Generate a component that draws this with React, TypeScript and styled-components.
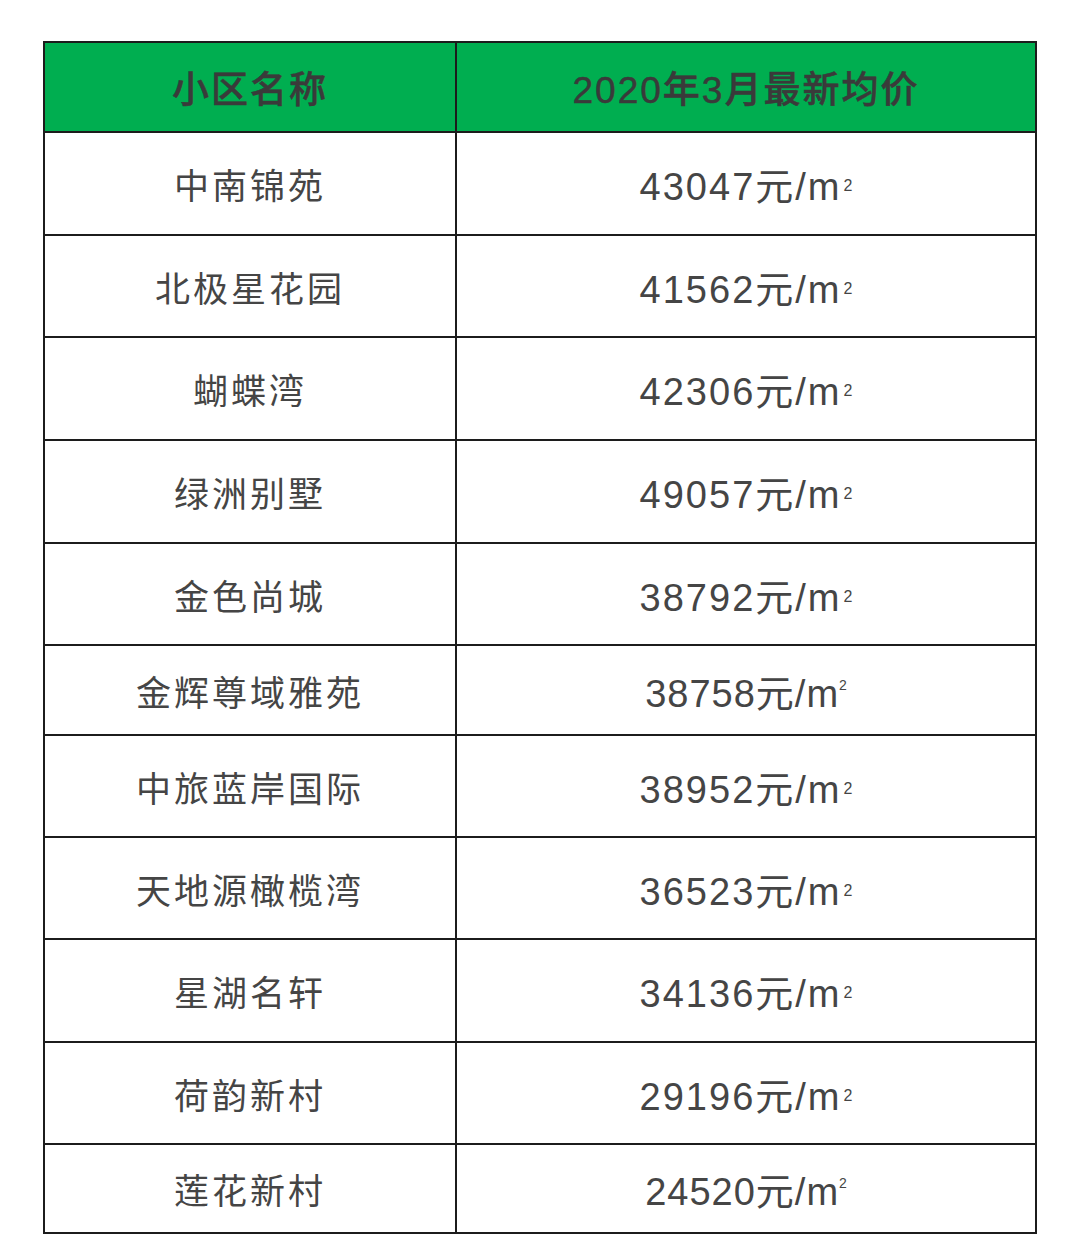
import styled, { createGlobalStyle } from "styled-components"

const GlobalStyle = createGlobalStyle`
    body {
        margin: 0;
        background: #ffffff;
        font-family: "Noto Sans CJK SC", "Noto Sans", sans-serif;
    }
`

const rows = [
    { name: '中南锦苑', price: '43047', h: 103 },
    { name: '北极星花园', price: '41562', h: 102 },
    { name: '蝴蝶湾', price: '42306', h: 103 },
    { name: '绿洲别墅', price: '49057', h: 103 },
    { name: '金色尚城', price: '38792', h: 102 },
    { name: '金辉尊域雅苑', price: '38758', h: 90, tight: true },
    { name: '中旅蓝岸国际', price: '38952', h: 102 },
    { name: '天地源橄榄湾', price: '36523', h: 102 },
    { name: '星湖名轩', price: '34136', h: 103 },
    { name: '荷韵新村', price: '29196', h: 102 },
    { name: '莲花新村', price: '24520', h: 89, tight: true },
]

export default function App() {
    return (
        <Page>
            <GlobalStyle />
            <PriceTable>
                <thead>
                    <tr>
                        <HeadCell>小区名称</HeadCell>
                        <HeadCell>2020年3月最新均价</HeadCell>
                    </tr>
                </thead>
                <tbody>
                    {rows.map((r) => (
                        <Row key={r.name} $h={r.h}>
                            <NameCell>{r.name}</NameCell>
                            <PriceCell $tight={!!r.tight}>
                                {r.price}元/m<Sup $tight={!!r.tight}>2</Sup>
                            </PriceCell>
                        </Row>
                    ))}
                </tbody>
            </PriceTable>
        </Page>
    )
}

const Page = styled.div`
    padding: 41px 0 0 43px;
`
const PriceTable = styled.table`
    width: 994px;
    border-collapse: collapse;
    table-layout: fixed;
    border: 2px solid #1c1c1c;
    color: #454545;
    td, th {
        border: 2px solid #1c1c1c;
        padding: 0;
        text-align: center;
        vertical-align: middle;
    }
    td:first-child, th:first-child {
        width: 410px;
    }
`
const HeadCell = styled.th`
    height: 88px;
    background: #00ae50;
    color: #3a3a3a;
    font-family: "Liberation Sans", "Noto Sans CJK SC", sans-serif;
    font-size: 37px;
    font-weight: 500;
    letter-spacing: 2px;
    -webkit-text-stroke: 0.5px #3a3a3a;
`
const Row = styled.tr<{ $h: number }>`
    height: ${({ $h }) => $h}px;
`
const NameCell = styled.td`
    font-size: 35px;
    letter-spacing: 3px;
`
const PriceCell = styled.td<{ $tight: boolean }>`
    font-family: "Liberation Sans", "Noto Sans CJK SC", sans-serif;
    font-size: 38px;
    letter-spacing: ${({ $tight }) => $tight ? '1px' : '2px'};
`
const Sup = styled.sup<{ $tight: boolean }>`
    font-size: ${({ $tight }) => $tight ? '14px' : '16px'};
    line-height: 0;
    vertical-align: ${({ $tight }) => $tight ? '17px' : '9px'};
    margin-left: ${({ $tight }) => $tight ? '0px' : '2px'};
    letter-spacing: 0;
`
